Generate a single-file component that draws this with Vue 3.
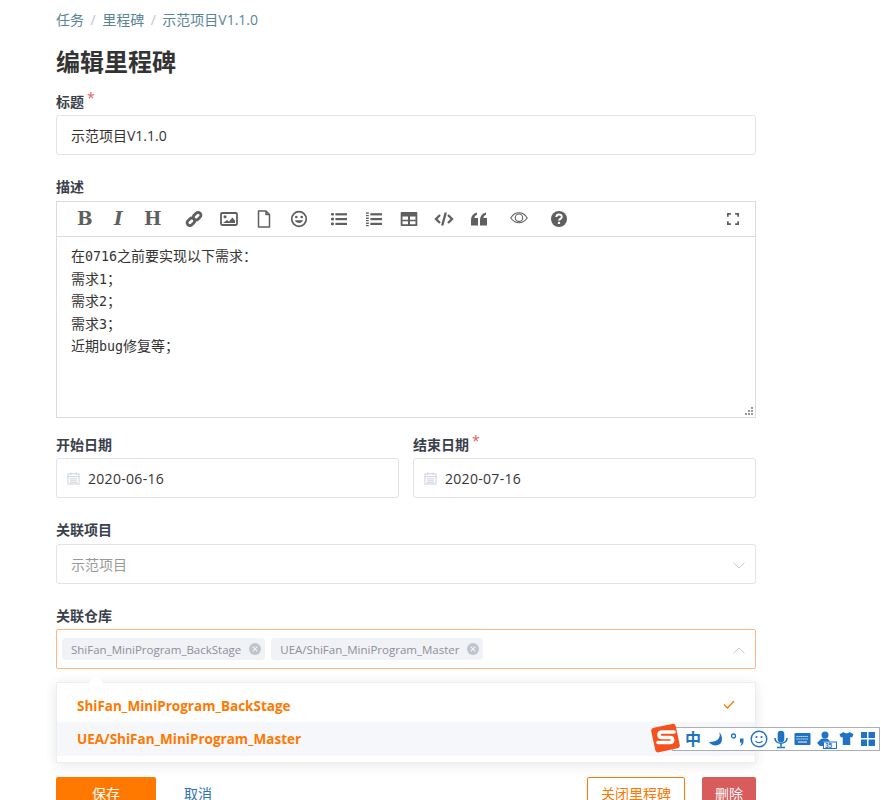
<script setup>
const tags = ['ShiFan_MiniProgram_BackStage','UEA/ShiFan_MiniProgram_Master']
</script>

<template>
  <div class="page">
    <div class="form">
      <nav class="crumbs">
        <a>任务</a><i>/</i><a>里程碑</a><i>/</i><a>示范项目V1.1.0</a>
      </nav>
      <h1>编辑里程碑</h1>

      <label class="lab first">标题<b>*</b></label>
      <div class="input">示范项目V1.1.0</div>

      <label class="lab desc-lab">描述</label>
      <div class="editor">
        <div class="toolbar">
          <span class="glyph g-b">B</span>
          <span class="glyph g-i">I</span>
          <span class="glyph g-h">H</span>
          <svg class="ic link" viewBox="0 0 18 18"><g fill="none" stroke="#5f5f5f" stroke-width="2.800"><rect x="1.800" y="9" width="8.600" height="5.600" rx="2.800" transform="rotate(-45 6 12)"/><rect x="7.600" y="3.400" width="8.600" height="5.600" rx="2.800" transform="rotate(-45 12 6)"/></g></svg>
          <svg class="ic image" viewBox="0 0 18 18"><rect x="1" y="3" width="16" height="12" rx="1.200" fill="none" stroke="#5f5f5f" stroke-width="1.800"/><circle cx="5" cy="6.800" r="1.500" fill="#5f5f5f"/><path d="M3 13l4-3 2 1.400 3.400-4 2.600 3.200V13z" fill="#5f5f5f"/></svg>
          <svg class="ic file" viewBox="0 0 18 18"><path d="M3.500 1h7.500l3.500 3.500V17h-11z M11 1v3.500h3.500" fill="none" stroke="#5f5f5f" stroke-width="1.500" stroke-linejoin="round"/></svg>
          <svg class="ic smile" viewBox="0 0 18 18"><circle cx="9" cy="9" r="7.300" fill="none" stroke="#5f5f5f" stroke-width="1.700"/><circle cx="6.300" cy="7" r="1.300" fill="#5f5f5f"/><circle cx="11.700" cy="7" r="1.300" fill="#5f5f5f"/><path d="M5 10.300c1 3.600 7 3.600 8 0z" fill="#5f5f5f"/></svg>
          <svg class="ic ul" viewBox="0 0 18 18"><g fill="#5f5f5f"><rect x="1" y="3" width="3" height="2.600" rx="1"/><rect x="1" y="7.800" width="3" height="2.600" rx="1"/><rect x="1" y="12.600" width="3" height="2.600" rx="1"/><rect x="5.400" y="3.200" width="11.600" height="2.200"/><rect x="5.400" y="8" width="11.600" height="2.200"/><rect x="5.400" y="12.800" width="11.600" height="2.200"/></g></svg>
          <svg class="ic ol" viewBox="0 0 18 18"><g fill="#5f5f5f"><rect x="1" y="2.400" width="2.800" height="1.400"/><rect x="1" y="5" width="2.800" height="1.200"/><rect x="1" y="7.600" width="2.800" height="1.400"/><rect x="1" y="10" width="2.800" height="1.200"/><rect x="1" y="12.600" width="2.800" height="1.400"/><rect x="1" y="15" width="2.800" height="1.200"/><rect x="5.400" y="3.200" width="11.600" height="2.200"/><rect x="5.400" y="8" width="11.600" height="2.200"/><rect x="5.400" y="12.800" width="11.600" height="2.200"/></g></svg>
          <svg class="ic table" viewBox="0 0 18 18"><path fill="#5f5f5f" fill-rule="evenodd" d="M1.500 2h15a.8.8 0 0 1 .8.8v12.400a.8.8 0 0 1-.8.8h-15a.8.8 0 0 1-.8-.8V2.800a.8.8 0 0 1 .8-.8zM2.500 6.500v3.200h5.500V6.500zm7.500 0v3.200h5.500V6.500zM2.500 11.300v3h5.500v-3zm7.500 0v3h5.500v-3z"/></svg>
          <svg class="ic code" viewBox="0 0 20 18"><g fill="none" stroke="#5f5f5f" stroke-width="2.300"><path d="M6 5L2 9l4 4"/><path d="M14 5l4 4-4 4"/><path d="M11.800 2.500L8.200 15.500"/></g></svg>
          <svg class="ic quote" viewBox="0 0 18 18"><g fill="#5f5f5f"><path d="M1 10c0-4 2-6.500 6-7.500v2.300C5.500 5.300 4.500 6.500 4.400 8H8v7.500H1z"/><path d="M10 10c0-4 2-6.500 6-7.500v2.300c-1.500.5-2.500 1.700-2.600 3.200H17v7.500h-7z"/></g></svg>
          <svg class="ic eye" viewBox="0 0 18 18"><g fill="none" stroke="#5f5f5f" stroke-width="1.100"><path d="M.8 9C3 5.300 6 3.800 9 3.800S15 5.300 17.200 9C15 12.200 12 13.700 9 13.700S3 12.200.8 9z"/><circle cx="9" cy="8.700" r="3.700"/></g></svg>
          <svg class="ic help" viewBox="0 0 18 18"><circle cx="9" cy="9" r="8" fill="#5f5f5f"/><path d="M6.300 7c.1-3.300 5.500-3.300 5.500-.1 0 2-2.800 1.900-2.800 3.700" fill="none" stroke="#fff" stroke-width="1.900"/><rect x="7.900" y="11.800" width="2.200" height="2.200" fill="#fff"/></svg>
          <svg class="ic full" viewBox="0 0 14 14"><path d="M1 4.500V1h3.500M9.500 1H13v3.500M13 9.500V13H9.500M4.500 13H1V9.500" fill="none" stroke="#5f5f5f" stroke-width="2"/></svg>
        </div>
        <div class="body">
          <p>在<span class="lat">0716</span>之前要实现以下需求：</p>
          <p>需求<span class="lat">1</span>；</p>
          <p>需求<span class="lat">2</span>；</p>
          <p>需求<span class="lat">3</span>；</p>
          <p>近期<span class="lat">bug</span>修复等；</p>
          <svg class="grip" viewBox="0 0 9 9"><g fill="#9a9a9a"><rect x="7" y="1" width="2" height="2"/><rect x="4" y="4" width="2" height="2"/><rect x="7" y="4" width="2" height="2"/><rect x="1" y="7" width="2" height="2"/><rect x="4" y="7" width="2" height="2"/><rect x="7" y="7" width="2" height="2"/></g></svg>
        </div>
      </div>

      <div class="dates">
        <div class="col">
          <label class="lab">开始日期</label>
          <div class="input date">
            <svg class="cal" viewBox="0 0 14 14"><g fill="none" stroke="#c9ced9"><rect x="1" y="2" width="12" height="11"/><path d="M1 5h12M4 .500v2.500M10 .500v2.500M3 7.500h8M3 9.500h8M3 11.500h8"/></g></svg>
            2020-06-16
          </div>
        </div>
        <div class="col">
          <label class="lab">结束日期<b>*</b></label>
          <div class="input date">
            <svg class="cal" viewBox="0 0 14 14"><g fill="none" stroke="#c9ced9"><rect x="1" y="2" width="12" height="11"/><path d="M1 5h12M4 .500v2.500M10 .500v2.500M3 7.500h8M3 9.500h8M3 11.500h8"/></g></svg>
            2020-07-16
          </div>
        </div>
      </div>

      <label class="lab proj">关联项目</label>
      <div class="input select muted">
        示范项目
        <svg class="chev" viewBox="0 0 12 7"><path d="M.5.800L6 6l5.500-5.200" fill="none" stroke="#c5c9d2"/></svg>
      </div>

      <label class="lab repo">关联仓库</label>
      <div class="multi">
        <span v-for="t in tags" :key="t" class="tag">
          {{ t }}
          <svg class="x" viewBox="0 0 12 12"><circle cx="6" cy="6" r="6" fill="#c0c4cc"/><path d="M3.700 3.700l4.600 4.600M8.300 3.700l-4.600 4.600" stroke="#f1f2f6" stroke-width="1.200"/></svg>
        </span>
        <svg class="chev" viewBox="0 0 12 7"><path d="M.5 6.200L6 1l5.500 5.200" fill="none" stroke="#c5c9d2"/></svg>
      </div>

      <div class="drop">
        <span class="arrow"></span>
        <div class="opt first-opt">
          ShiFan_MiniProgram_BackStage
          <svg class="check" viewBox="0 0 12 9"><path d="M1 4.500L4.500 8 11 1" fill="none" stroke="#ff7800" stroke-width="1.300"/></svg>
        </div>
        <div class="opt hover">UEA/ShiFan_MiniProgram_Master</div>
      </div>

      <div class="actions">
        <button class="btn save">保存</button>
        <button class="btn cancel">取消</button>
        <span class="spacer"></span>
        <button class="btn close">关闭里程碑</button>
        <button class="btn del">删除</button>
      </div>
    </div>

    <div class="ime">
      <svg class="ime-logo" viewBox="0 0 30 30"><rect x="2" y="2.500" width="25" height="25" rx="3" fill="#f4511e" transform="rotate(-12 15 15)"/><path d="M23 9H11c-4 0-4 5.500 0 5.500h8c3.500 0 3.500 5 0 5H7" fill="none" stroke="#fff" stroke-width="3.600" stroke-linecap="round"/></svg>
      <span class="zh">中</span>
      <svg class="i moon" viewBox="0 0 16 16"><path d="M11 1c2.500 5-1 10-10 10 3 5 13 5 13-3 0-3-1-5-3-7z" fill="#1f72c4"/></svg>
      <svg class="i punc" viewBox="0 0 16 16"><circle cx="3.500" cy="5" r="2" fill="none" stroke="#1f72c4" stroke-width="1.300"/><path d="M10 7.500h3.500v3C13.500 13 12 14.500 10 15c1-1.200 1.500-2 1.500-3.500H10z" fill="#1f72c4"/></svg>
      <svg class="i face" viewBox="0 0 18 18"><circle cx="9" cy="9" r="7.800" fill="none" stroke="#1f72c4" stroke-width="1.400"/><circle cx="6.500" cy="7" r="1.100" fill="#1f72c4"/><circle cx="11.500" cy="7" r="1.100" fill="#1f72c4"/><path d="M5.500 11c1.500 2.200 5.500 2.200 7 0" fill="none" stroke="#1f72c4" stroke-width="1.200"/></svg>
      <svg class="i mic" viewBox="0 0 16 18"><rect x="4.700" y="0.300" width="6.600" height="11.500" rx="3.300" fill="#1f72c4"/><path d="M2 7.500c0 7 12 7 12 0M8 13v3M4 17h8" fill="none" stroke="#1f72c4" stroke-width="1.600"/></svg>
      <svg class="i kb" viewBox="0 0 16 12"><rect x="0" y="0" width="16" height="12" rx="1" fill="#1f72c4"/><path d="M2 3.500h12M2 6h12" stroke="#fff" stroke-dasharray="1.200 .8"/><path d="M3.500 9h9" stroke="#fff"/></svg>
      <svg class="i user" viewBox="0 0 20 18"><circle cx="8" cy="4" r="3.500" fill="#1f72c4"/><path d="M0 12l4-4c1-.8 6-.8 7 0l2 2.500H6V15H3z" fill="#1f72c4"/><rect x="6" y="10.500" width="14" height="7.500" fill="#1f72c4"/><rect x="7" y="11.500" width="12" height="5.500" fill="#fff"/><text x="8" y="16.700" class="num">35</text></svg>
      <svg class="i shirt" viewBox="0 0 16 16"><path d="M5 1L.5 3.500 2 7l2-.5V15h8V6.500l2 .5 1.500-3.500L11 1c-.5 2-5.500 2-6 0z" fill="#1f72c4"/></svg>
      <svg class="i grid" viewBox="0 0 14 14"><g fill="#1f72c4"><rect x="0" y="0" width="6" height="6"/><rect x="7.500" y="0" width="6.500" height="6"/><rect x="0" y="7.500" width="6" height="6.500"/><rect x="7.500" y="7.500" width="6.500" height="6.500"/></g></svg>
    </div>
  </div>
</template>

<style>
html, body { margin: 0; overflow: hidden; background: #fff; }
</style>

<style scoped>
.page {
  position: relative;
  width: 881px;
  height: 800px;
  overflow: hidden;
  font-family: "Open Sans", "Noto Sans CJK SC", sans-serif;
  font-size: 14px;
  color: #333;
}
.form { width: 700px; margin-left: 56px; }
.crumbs { height: 40px; line-height: 40px; color: #5a8595; display: flex; }
.crumbs i { font-style: normal; color: #c0c4cc; margin: 0 6.500px; }
h1 { margin: 4px 0 0; font-size: 24px; line-height: 36px; font-weight: 700; color: #333; }
.lab { display: block; height: 20px; line-height: 20px; font-size: 14px; font-weight: 700; color: #3a3f4b; }
.lab b { color: #e25c5c; font-weight: 400; margin-left: 3px; position: relative; top: -4px; }
.first { margin-top: 12px; margin-bottom: 3px; }
.input {
  box-sizing: border-box;
  height: 40px;
  border: 1px solid #e2e3e9;
  border-radius: 3px;
  padding: 0 14px;
  display: flex;
  align-items: center;
  font-size: 14px;
  color: #333;
}
.desc-lab { margin-top: 22px; margin-bottom: 4px; }
.editor { border: 1px solid #dcdcdc; height: 217px; box-sizing: border-box; display: flex; flex-direction: column; }
.toolbar { height: 35px; box-sizing: border-box; border-bottom: 1px solid #dcdcdc; position: relative; flex: none; }
.glyph, .ic { position: absolute; }
.glyph { font-family: "DejaVu Serif", serif; font-weight: 700; font-size: 18.500px; color: #5f5f5f; top: 5px; line-height: 24px; }
.g-b { left: 20px; }
.g-i { left: 57px; font-style: italic; }
.g-h { left: 87px; }
.ic { width: 18px; height: 18px; top: 8px; }
.link { left: 128px; }
.image { left: 163px; }
.file { left: 198px; }
.smile { left: 233px; }
.ul { left: 273px; }
.ol { left: 308px; }
.table { left: 343px; }
.code { left: 377px; width: 20px; }
.quote { left: 413px; }
.eye { left: 453px; top: 7px; }
.help { left: 493px; }
.full { left: 670px; width: 12px; height: 12px; top: 11px; }
.body { flex: 1; position: relative; padding: 8px 14px; font-family: "DejaVu Sans Mono", "Noto Sans CJK SC", monospace; font-size: 14px; color: #333; }
.body p { margin: 0; height: 22.500px; line-height: 22.500px; }
.lat { font-size: 13.300px; }
.grip { position: absolute; right: 2px; bottom: 2px; width: 9px; height: 9px; }
.dates { display: flex; gap: 14px; margin-top: 17px; }
.col { flex: 1; }
.col .lab { margin-bottom: 3px; }
.date { padding-left: 10px; gap: 8px; color: #333; letter-spacing: .3px; }
.cal { width: 13px; height: 13px; }
.proj { margin-top: 22px; margin-bottom: 4px; }
.select { position: relative; }
.muted { color: #999; }
.chev { position: absolute; right: 10px; top: 17px; width: 12px; height: 7px; }
.repo { margin-top: 22px; margin-bottom: 3px; }
.multi {
  position: relative;
  box-sizing: border-box;
  height: 40px;
  border: 1px solid #ffb77f;
  border-radius: 2px;
  padding: 0 5px;
  display: flex;
  align-items: center;
  gap: 6px;
}
.tag {
  height: 22px;
  border-radius: 4px;
  background: #f1f2f6;
  color: #8d8f99;
  font-size: 11.500px;
  padding: 0 4px 0 9px;
  display: flex;
  align-items: center;
  gap: 8px;
  white-space: nowrap;
}
.x { width: 12px; height: 12px; }
.drop {
  position: relative;
  margin-top: 13px;
  height: 81px;
  box-sizing: border-box;
  padding: 5px 0 0;
  background: #fff;
  border: 1px solid #eceef2;
  box-shadow: 0 2px 12px rgba(0, 0, 0, .1);
}
.arrow {
  position: absolute;
  left: 34px;
  top: -6px;
  width: 10px;
  height: 10px;
  background: #fff;
  transform: rotate(45deg);
}
.opt {
  position: relative;
  height: 34px;
  line-height: 34px;
  padding-left: 20px;
  font-size: 13.500px;
  font-weight: 700;
  color: #ff7800;
}
.first-opt { line-height: 36px; }
.hover { background: #f5f7fa; }
.check { position: absolute; right: 20px; top: 12px; width: 12px; height: 9px; }
.actions { display: flex; margin-top: 14px; align-items: flex-start; }
.spacer { flex: 1; }
.btn {
  box-sizing: border-box;
  height: 32px;
  border: 0;
  padding: 0;
  font: inherit;
  font-size: 14px;
  background: none;
  border-radius: 2px;
}
.save { width: 100px; background: #ff7800; color: #fff; }
.cancel { width: 84px; color: #2f73b8; }
.close { width: 98px; border: 1px solid #ff7800; color: #ff7800; margin-right: 17px; }
.del { width: 54px; background: #d95c5c; color: #fff; }
.ime {
  position: absolute;
  left: 672px;
  top: 727px;
  width: 206px;
  height: 22px;
  box-sizing: content-box;
  background: #fff;
  border: 1px solid #a9aeb8;
  display: block;
}
.ime-logo { position: absolute; left: -22px; top: -5px; width: 30px; height: 30px; }
.ime .zh { position: absolute; left: 12px; top: 0; line-height: 22px; font-size: 16px; font-weight: 700; color: #1f72c4; }
.i { position: absolute; }
.moon { left: 35px; top: 3px; width: 16px; height: 16px; }
.punc { left: 57px; top: 3px; width: 16px; height: 16px; }
.face { left: 77px; top: 2px; width: 18px; height: 18px; }
.mic { left: 100px; top: 2px; width: 16px; height: 19px; }
.kb { left: 121px; top: 5px; width: 17px; height: 12px; }
.user { left: 144px; top: 3px; width: 20px; height: 18px; }
.num { font: 700 6.500px "Liberation Sans", sans-serif; fill: #1f72c4; }
.shirt { left: 166px; top: 3px; width: 15px; height: 15px; }
.grid { left: 188px; top: 4px; width: 14px; height: 14px; }
</style>
